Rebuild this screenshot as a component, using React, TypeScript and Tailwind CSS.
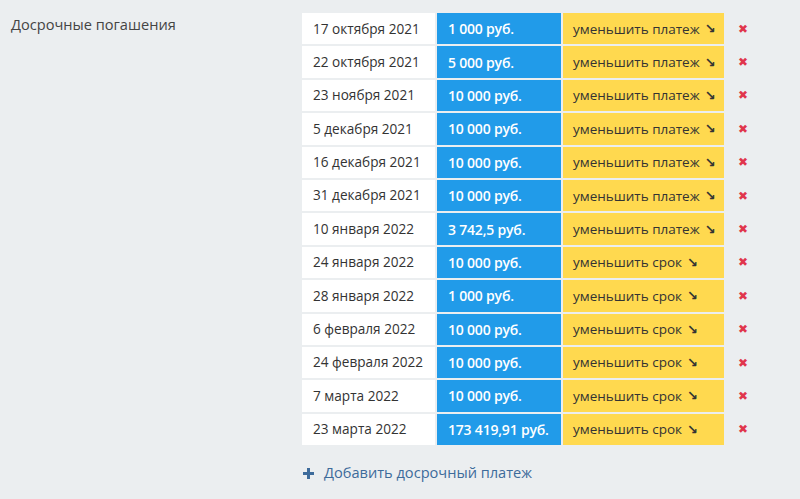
import React from "react";

const rows: [string, string, string][] = [
  ["17 октября 2021", "1 000 руб.", "уменьшить платеж"],
  ["22 октября 2021", "5 000 руб.", "уменьшить платеж"],
  ["23 ноября 2021", "10 000 руб.", "уменьшить платеж"],
  ["5 декабря 2021", "10 000 руб.", "уменьшить платеж"],
  ["16 декабря 2021", "10 000 руб.", "уменьшить платеж"],
  ["31 декабря 2021", "10 000 руб.", "уменьшить платеж"],
  ["10 января 2022", "3 742,5 руб.", "уменьшить платеж"],
  ["24 января 2022", "10 000 руб.", "уменьшить срок"],
  ["28 января 2022", "1 000 руб.", "уменьшить срок"],
  ["6 февраля 2022", "10 000 руб.", "уменьшить срок"],
  ["24 февраля 2022", "10 000 руб.", "уменьшить срок"],
  ["7 марта 2022", "10 000 руб.", "уменьшить срок"],
  ["23 марта 2022", "173 419,91 руб.", "уменьшить срок"],
];

export default function App() {
  return (
    <div
      className="w-[800px] h-[499px] bg-[#ebeef0] flex text-[14px] text-[#333]"
      style={{ fontFamily: '"Open Sans", "Noto Sans", sans-serif' }}
    >
      <div className="w-[302px] pl-[11px] pt-[14px] text-[14.6px] text-[#444] leading-[20px]">Досрочные погашения</div>
      <div className="flex flex-col pt-[13px]">
        <div className="flex flex-col gap-[2px]">
          {rows.map((r, i) => (
            <div key={i} className="flex h-[31.4px] items-stretch">
              <div className="w-[133px] bg-white flex items-center pl-[11px] text-[13.6px]">{r[0]}</div>
              <div className="w-[124px] ml-[2px] bg-[#219be9] text-white font-semibold flex items-center pl-[11px] text-[14px] tracking-[-0.2px]">
                {r[1]}
              </div>
              <div className="w-[161px] ml-[2px] bg-[#ffd94f] flex items-center pl-[10px] text-[13.5px] text-[#333]">
                {r[2]}
                <span className="ml-[5px] font-bold text-[13px] leading-none" style={{ fontFamily: '"DejaVu Sans", sans-serif' }}>↘</span>
              </div>
              <div className="w-[38px] flex items-center justify-center text-[#e0354c] text-[12px]" style={{ fontFamily: '"DejaVu Sans", sans-serif' }}>
                ✖
              </div>
            </div>
          ))}
        </div>
        <div className="flex items-center mt-[17px] text-[#3d6b9b] pl-[1px]">
          <svg width="11" height="11" viewBox="0 0 11 11" className="mr-[10px]">
            <rect x="4" y="0" width="3" height="11" fill="#3d6b9b" />
            <rect x="0" y="4" width="11" height="3" fill="#3d6b9b" />
          </svg>
          <span className="text-[14.6px]">Добавить досрочный платеж</span>
        </div>
      </div>
    </div>
  );
}
